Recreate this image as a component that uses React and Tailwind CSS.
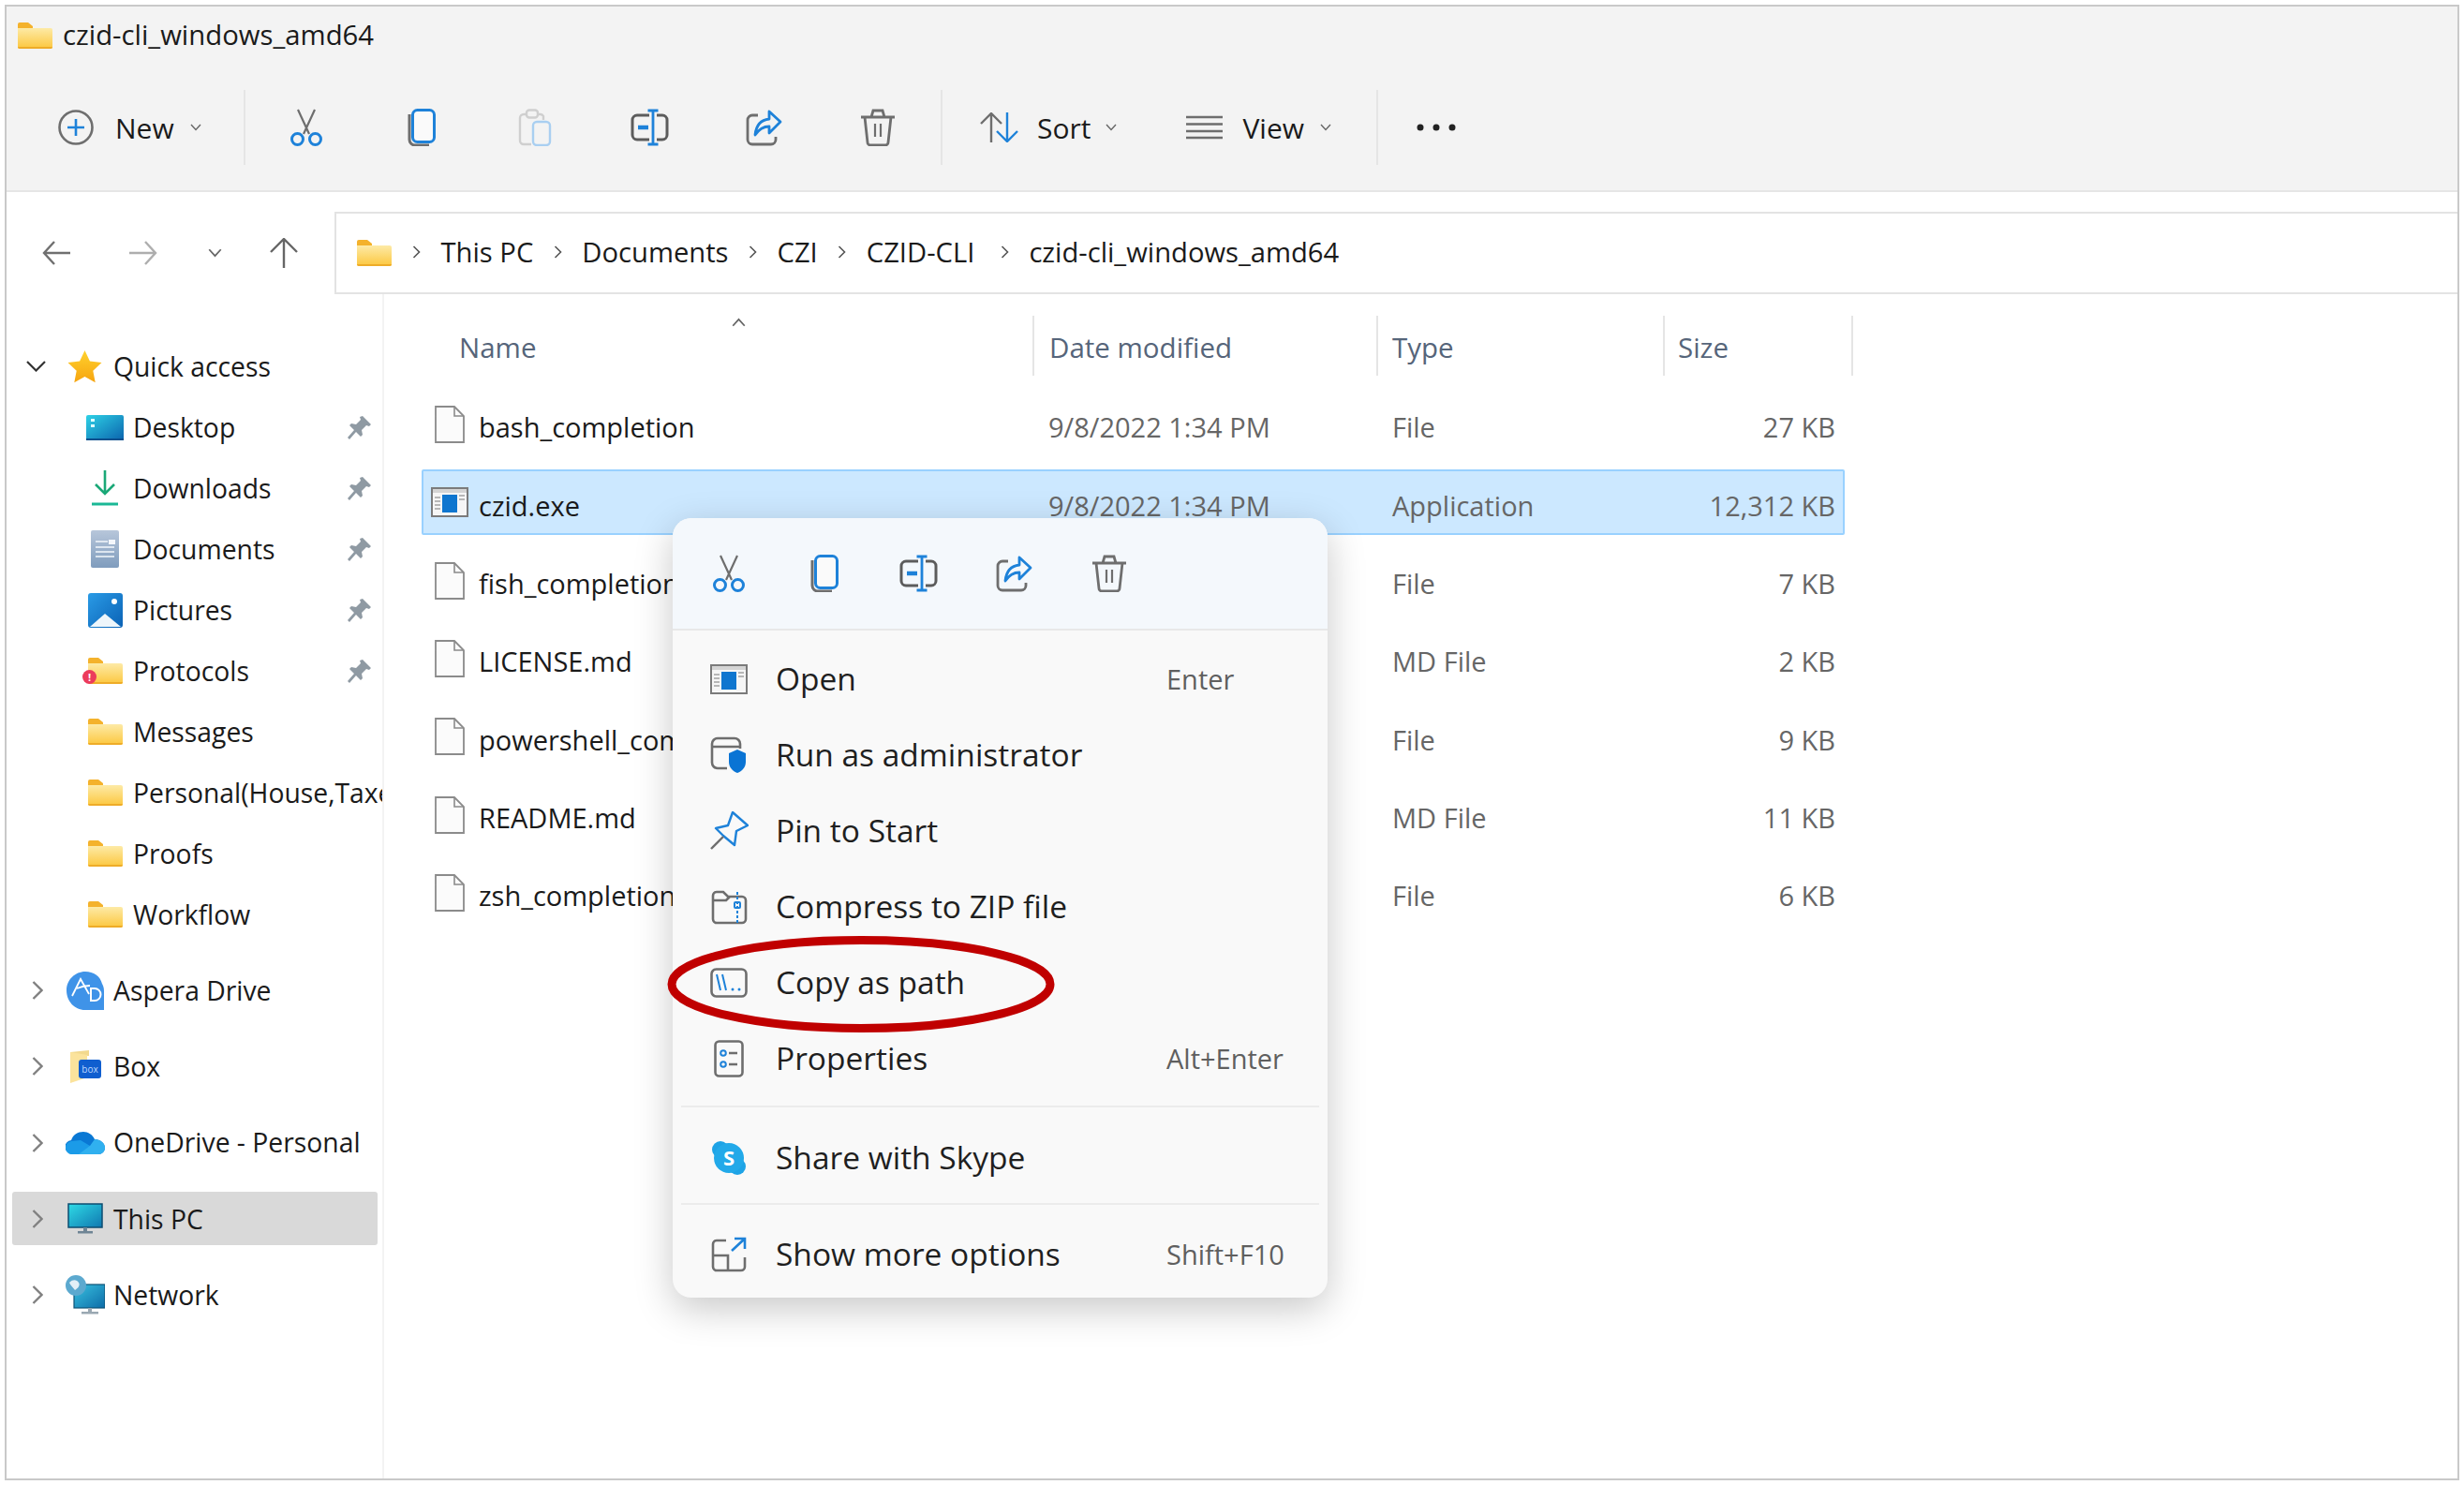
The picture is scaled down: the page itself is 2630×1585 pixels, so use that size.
const blue="#1e82d9";
const gray="#6e6e6e";

function FolderIcon({className="w-[37px] h-[28px]"}){
  return <svg viewBox="0 0 37 28" className={className}>
    <defs><linearGradient id="fold" x1="0" y1="0" x2="0" y2="1"><stop offset="0" stopColor="#fdeaa6"/><stop offset="1" stopColor="#fcc73e"/></linearGradient></defs>
    <path d="M0 2a2 2 0 0 1 2-2h9l5 4v4H0z" fill="#f4b22c"/>
    <path d="M0 6h35a2 2 0 0 1 2 2v18a2 2 0 0 1-2 2H2a2 2 0 0 1-2-2z" fill="url(#fold)"/>
    <path d="M0 26h37a2 2 0 0 1-2 2H2a2 2 0 0 1-2-2z" fill="#eeac28"/>
  </svg>;
}
function CutIcon(){
  return <svg viewBox="0 0 36 40" fill="none" className="w-[36px] h-[40px]">
    <path d="M9 1l12 26M27 1L15 27" stroke={gray} strokeWidth="2.2"/>
    <circle cx="8.5" cy="32.5" r="6" stroke={blue} strokeWidth="3"/>
    <circle cx="27.5" cy="32.5" r="6" stroke={blue} strokeWidth="3"/>
  </svg>;
}
function CopyIcon(){
  return <svg viewBox="0 0 31 40" fill="none" className="w-[31px] h-[40px]">
    <path d="M3 6v27a6 6 0 0 0 6 6h15" stroke={gray} strokeWidth="3"/>
    <rect x="6.5" y="1.5" width="23" height="34" rx="5" fill="#fafafa" stroke={blue} strokeWidth="3"/>
  </svg>;
}
function PasteIcon(){
  return <svg viewBox="0 0 36 40" fill="none" className="w-[36px] h-[40px]">
    <path d="M14 38H6a4 4 0 0 1-4-4V10a4 4 0 0 1 4-4h18a4 4 0 0 1 3 2v4" stroke="#cfcfcf" strokeWidth="2.4"/>
    <rect x="9" y="1.5" width="12" height="8" rx="3" fill="#f3f3f3" stroke="#cfcfcf" strokeWidth="2.4"/>
    <rect x="16" y="14" width="18" height="25" rx="4" fill="#f3f3f3" stroke="#a9cff1" strokeWidth="2.4"/>
  </svg>;
}
function RenameIcon(){
  return <svg viewBox="0 0 41 40" fill="none" className="w-[41px] h-[40px]">
    <path d="M20 7H7a5 5 0 0 0-5 5v16a5 5 0 0 0 5 5h13M28 7h6a5 5 0 0 1 5 5v16a5 5 0 0 1-5 5h-6" stroke="#5c5c5c" strokeWidth="3"/>
    <path d="M24 2v36M18.500 2h11M18.500 38h11" stroke={blue} strokeWidth="2.800"/>
    <path d="M8 20h11" stroke={blue} strokeWidth="4.500"/>
  </svg>;
}
function ShareIcon(){
  return <svg viewBox="0 0 39 40" fill="none" className="w-[39px] h-[40px]">
    <path d="M13 7H7a5 5 0 0 0-5 5v21a5 5 0 0 0 5 5h20a5 5 0 0 0 5-5v-3" stroke={gray} strokeWidth="2.8"/>
    <path d="M25 3l12 11-12 12v-7c-7 0-11 3-15 9 1-10 6-16 15-17z" stroke={blue} strokeWidth="2.8" strokeLinejoin="round"/>
  </svg>;
}
function TrashIcon(){
  return <svg viewBox="0 0 38 40" fill="none" stroke={gray} strokeWidth="2.8" className="w-[38px] h-[40px]">
    <path d="M1 9h36M12 9l2-7h10l2 7M5 9l3 27a3 3 0 0 0 3 3h16a3 3 0 0 0 3-3l3-27"/>
    <path d="M16 16v14M22 16v14" strokeWidth="2.2"/>
  </svg>;
}
function Caret({className="w-[12px] h-[8px]",color="#666"}){
  return <svg viewBox="0 0 12 8" fill="none" className={className}><path d="M1 1l5 5.5L11 1" stroke={color} strokeWidth="1.4"/></svg>;
}
function Crumb(){
  return <svg viewBox="0 0 9 14" fill="none" className="w-[9px] h-[14px] shrink-0"><path d="M1.5 1l6 6-6 6" stroke="#555" strokeWidth="1.6"/></svg>;
}
function PageIcon(){
  return <svg viewBox="0 0 32 40" fill="none" className="w-[32px] h-[40px]">
    <path d="M1 1h20l10 10v28H1z" fill="#fbfbfb" stroke="#8b8b8b" strokeWidth="1.8"/>
    <path d="M21 1v10h10" stroke="#8b8b8b" strokeWidth="1.6"/>
  </svg>;
}
function ExeIcon(){
  return <svg viewBox="0 0 40 32" className="w-[40px] h-[32px]">
    <rect x="1" y="1" width="38" height="30" fill="#f6f6f6" stroke="#7b7b7b" strokeWidth="2"/>
    <rect x="2" y="2" width="36" height="4" fill="#d5d5d5"/>
    <rect x="12" y="8" width="16" height="19" fill="#0f76cf"/>
    <path d="M4 11h6M4 15h6M4 19h6M4 23h6M30 9h6M30 13h6" stroke="#a3a3a3" strokeWidth="1.4"/>
  </svg>;
}
function Pin(){
  return <svg viewBox="0 0 26 26" className="w-[26px] h-[26px]">
    <path d="M16 1l9 9-2 2-3-1-5 5 1 5-2 2-5-5-7 8-2-2 7-8-5-5 2-2 5 1 5-5-1-3z" fill="#8f9aa3"/>
  </svg>;
}
function QuickIcon({kind}){
  if(kind==="desktop")return <svg viewBox="0 0 40 27" className="w-[40px] h-[27px]">
    <defs><linearGradient id="desk" x1="0" y1="0" x2="1" y2="1"><stop offset="0" stopColor="#2ed2e6"/><stop offset="1" stopColor="#0b63ad"/></linearGradient></defs>
    <rect width="40" height="27" rx="2" fill="url(#desk)"/><rect x="5" y="4" width="4" height="3" fill="#dff"/><rect x="5" y="10" width="4" height="3" fill="#dff"/>
    <path d="M0 25h40v2H0z" fill="#0a4f8d"/>
  </svg>;
  if(kind==="downloads")return <svg viewBox="0 0 30 40" fill="none" className="w-[30px] h-[40px]">
    <path d="M15 1v25M5 16l10 10 10-10" stroke="#1aa877" strokeWidth="2.6"/><path d="M1 37h28" stroke="#1bb896" strokeWidth="3"/>
  </svg>;
  if(kind==="documents")return <svg viewBox="0 0 30 40" className="w-[30px] h-[40px]">
    <defs><linearGradient id="docs" x1="0" y1="0" x2="0" y2="1"><stop offset="0" stopColor="#b7c6da"/><stop offset="1" stopColor="#7f9cbd"/></linearGradient></defs>
    <rect width="30" height="40" rx="2" fill="url(#docs)"/>
    <path d="M5 12h13M5 18h20M5 23h20M5 28h20" stroke="#f4f7fb" strokeWidth="1.5"/><rect x="19" y="10" width="7" height="5" fill="#f4f7fb"/>
  </svg>;
  if(kind==="pictures")return <svg viewBox="0 0 37 37" className="w-[37px] h-[37px]">
    <defs><linearGradient id="pics" x1="0" y1="0" x2="1" y2="1"><stop offset="0" stopColor="#2a9be6"/><stop offset="1" stopColor="#0b62b5"/></linearGradient></defs>
    <rect width="37" height="37" rx="3" fill="url(#pics)"/><path d="M2 36l16-14 17 14z" fill="#eef6fb"/><circle cx="28" cy="9" r="3" fill="#fff"/>
  </svg>;
  return <FolderIcon/>;
}
function StarIcon(){
  return <svg viewBox="0 0 37 36" className="w-[37px] h-[36px]">
    <defs><linearGradient id="star" x1="0" y1="0" x2="0" y2="1"><stop offset="0" stopColor="#ffd22e"/><stop offset="1" stopColor="#f6a40f"/></linearGradient></defs>
    <path d="M18.5 1l5.4 11.4 12.6 1.6-9.2 8.7 2.4 12.6-11.2-6.2-11.2 6.2 2.4-12.6L.5 14l12.6-1.6z" fill="url(#star)"/>
  </svg>;
}
function DriveIcon({kind}){
  if(kind==="aspera")return <svg viewBox="0 0 40 42" className="w-[40px] h-[42px]">
    <path d="M20 1c9 0 16 5 18 13 1 2 2 4 2 8v20H20C8 42 0 32 0 21 0 10 9 1 20 1z" fill="#3f93e8"/>
    <path d="M6 27L15 9l9 16M11 19c7-3 12-3 14-3" fill="none" stroke="#fff" strokeWidth="1.8"/>
    <path d="M26 19v13h4a6.500 6.500 0 0 0 0-13z" fill="none" stroke="#fff" strokeWidth="2"/>
  </svg>;
  if(kind==="box")return <svg viewBox="0 0 34 36" className="w-[34px] h-[36px]">
    <path d="M1 3l20-2v6H1z" fill="#f2d98e"/><path d="M1 3l18 3v24L1 36z" fill="#fbe39c"/>
    <rect x="10" y="11" width="24" height="20" rx="3" fill="#0f5ecf"/>
    <text x="22" y="25" textAnchor="middle" fontSize="10" fill="#bcd7ff" fontFamily="Open Sans">box</text>
  </svg>;
  if(kind==="onedrive")return <svg viewBox="0 0 42 24" className="w-[42px] h-[24px]">
    <path d="M7 23a7 7 0 0 1-1-14C8 3 13 0 19 0c5 0 10 3 12 8 6 0 11 4 11 9 0 4-3 7-7 7H8z" fill="#0a78d4"/>
    <path d="M8 24a7 7 0 0 1-2-14l10-1 10 6 9 9z" fill="#1b9be8"/><path d="M14 24l12-9 5-7c6 0 11 4 11 9 0 4-3 7-7 7z" fill="#30b0ef"/>
  </svg>;
  if(kind==="pc")return <svg viewBox="0 0 38 33" className="w-[38px] h-[33px]">
    <defs><linearGradient id="mon" x1="0" y1="0" x2="1" y2="1"><stop offset="0" stopColor="#2fdbe6"/><stop offset="1" stopColor="#0f77b0"/></linearGradient></defs>
    <rect x="1" y="1" width="36" height="25" fill="url(#mon)" stroke="#0c4c70" strokeWidth="1.5"/>
    <rect x="17" y="26" width="4" height="4" fill="#6f8595"/><rect x="11" y="30" width="16" height="2.500" fill="#6f8595"/>
  </svg>;
  return <svg viewBox="0 0 42 42" className="w-[42px] h-[42px]">
    <defs><linearGradient id="net" x1="0" y1="0" x2="1" y2="1"><stop offset="0" stopColor="#39c2e0"/><stop offset="1" stopColor="#0d6ca8"/></linearGradient></defs>
    <rect x="9" y="10" width="33" height="25" fill="url(#net)" stroke="#0c5276" strokeWidth="1.200"/>
    <rect x="24" y="35" width="4" height="4" fill="#9aa8b2"/><rect x="17" y="39" width="18" height="2.500" fill="#9aa8b2"/>
    <circle cx="11" cy="11" r="11" fill="#5ca9cf"/><path d="M4 8c4-4 8-3 10 0 2 3-1 6-4 8-2-3-5-5-6-8z" fill="#e3f0f7"/>
  </svg>;
}
function OpenIcon(){return <ExeIcon/>;}
function AdminIcon(){
  return <svg viewBox="0 0 40 40" fill="none" className="w-[40px] h-[40px]">
    <path d="M18 34H8a6 6 0 0 1-6-6V8a6 6 0 0 1 6-6h18a6 6 0 0 1 6 6v5M2 11h30" stroke={gray} strokeWidth="2.6"/>
    <path d="M29 14l9 4v9c0 6-4 10-9 12-5-2-9-6-9-12v-9z" fill="#0a74d4"/>
  </svg>;
}
function PinOutline(){
  return <svg viewBox="0 0 41 41" fill="none" className="w-[41px] h-[41px]">
    <path d="M24 1l16 14-12 6-2 15-12-10-8-8 13-3z" stroke={blue} strokeWidth="2.400" strokeLinejoin="round"/>
    <path d="M14 27L1 40" stroke={gray} strokeWidth="2.400"/>
  </svg>;
}
function ZipIcon(){
  return <svg viewBox="0 0 40 38" fill="none" className="w-[40px] h-[38px]">
    <path d="M3 32V7a4 4 0 0 1 4-4h7l5 5h15a4 4 0 0 1 4 4v20a4 4 0 0 1-4 4H7a4 4 0 0 1-4-4zM3 12h14l4-4" stroke={gray} strokeWidth="2.6"/>
    <path d="M29 3v34" stroke={blue} strokeWidth="2" strokeDasharray="3 2"/><rect x="26" y="14" width="6" height="6" rx="1" stroke={blue} strokeWidth="2"/>
  </svg>;
}
function PathIcon(){
  return <svg viewBox="0 0 40 32" fill="none" className="w-[40px] h-[32px]">
    <rect x="1.500" y="1.500" width="37" height="29" rx="5" stroke={gray} strokeWidth="2.600"/>
    <path d="M7 7l4 17M13 7l4 17" stroke={blue} strokeWidth="2"/><circle cx="24" cy="23" r="1.500" fill={blue}/><circle cx="31" cy="23" r="1.500" fill={blue}/>
  </svg>;
}
function PropsIcon(){
  return <svg viewBox="0 0 32 40" fill="none" className="w-[32px] h-[40px]">
    <rect x="1.500" y="1.500" width="29" height="37" rx="4" stroke={gray} strokeWidth="2.600"/>
    <circle cx="10" cy="14" r="2.800" stroke={blue} strokeWidth="2"/><circle cx="10" cy="26" r="2.800" stroke={blue} strokeWidth="2"/>
    <path d="M16 14h9M16 26h9" stroke={gray} strokeWidth="2.400"/>
  </svg>;
}
function SkypeIcon(){
  return <svg viewBox="0 0 38 38" className="w-[38px] h-[38px]">
    <circle cx="10" cy="10" r="9" fill="#1ea3e6"/><circle cx="28" cy="28" r="9" fill="#1ea3e6"/><circle cx="19" cy="19" r="16" fill="#22a9e9"/>
    <text x="19" y="27" textAnchor="middle" fontSize="22" fontWeight="700" fill="#fff" fontFamily="Open Sans">S</text>
  </svg>;
}
function MoreIcon(){
  return <svg viewBox="0 0 38 38" fill="none" className="w-[38px] h-[38px]">
    <path d="M16 4H6a4 4 0 0 0-4 4v24a4 4 0 0 0 4 4h26a4 4 0 0 0 4-4V22M2 20h16v16" stroke={gray} strokeWidth="2.600"/>
    <path d="M22 15L36 2M25 2h11v11" stroke={blue} strokeWidth="2.600"/>
  </svg>;
}

const quickItems=[
  {label:"Desktop",kind:"desktop",pinned:true},
  {label:"Downloads",kind:"downloads",pinned:true},
  {label:"Documents",kind:"documents",pinned:true},
  {label:"Pictures",kind:"pictures",pinned:true},
  {label:"Protocols",kind:"folder",pinned:true,badge:true},
  {label:"Messages",kind:"folder"},
  {label:"Personal(House,Taxes)",kind:"folder"},
  {label:"Proofs",kind:"folder"},
  {label:"Workflow",kind:"folder"},
];
const driveItems=[
  {label:"Aspera Drive",kind:"aspera"},
  {label:"Box",kind:"box"},
  {label:"OneDrive - Personal",kind:"onedrive"},
  {label:"This PC",kind:"pc",active:true},
  {label:"Network",kind:"network"},
];
// dates of the lower rows sit behind the context menu
const files=[
  {name:"bash_completion",date:"9/8/2022 1:34 PM",type:"File",size:"27 KB"},
  {name:"czid.exe",date:"9/8/2022 1:34 PM",type:"Application",size:"12,312 KB",selected:true},
  {name:"fish_completion",type:"File",size:"7 KB"},
  {name:"LICENSE.md",type:"MD File",size:"2 KB"},
  {name:"powershell_completion",type:"File",size:"9 KB"},
  {name:"README.md",type:"MD File",size:"11 KB"},
  {name:"zsh_completion",type:"File",size:"6 KB"},
];
const crumbs=["This PC","Documents","CZI","CZID-CLI","czid-cli_windows_amd64"];

function MenuRow({icon,label,shortcut}){
  return <div className="flex items-center h-[81px] pl-[10px]">
    <span className="w-[100px] flex justify-center shrink-0">{icon}</span>
    <span className="text-[33.5px] text-[#1f1f1f]">{label}</span>
    {shortcut&&<span className="ml-auto w-[172px] text-[29px] text-[#5f5f5f]">{shortcut}</span>}
  </div>;
}

export default function App(){
  return <div className="relative w-[2630px] h-[1585px] bg-white p-[5px] font-['Open_Sans',sans-serif] text-[#1a1a1a] overflow-hidden">
    <div className="flex flex-col w-full h-full border-[2.5px] border-[#c9c9c9]">
      <div className="h-[197.5px] bg-[#f3f3f3] border-b-2 border-[#e6e6e6] shrink-0">
        <div className="flex items-center gap-[11px] h-[62px] pl-[12px]">
          <FolderIcon/>
          <span className="text-[29.3px]">czid-cli_windows_amd64</span>
        </div>
        <div className="flex items-center h-[80px] mt-[27px]">
          <div className="flex items-center w-[253px] pl-[55px]">
            <svg viewBox="0 0 38 38" fill="none" className="w-[38px] h-[38px]">
              <circle cx="19" cy="19" r="17.500" stroke={gray} strokeWidth="2.600"/><path d="M19 10v18M10 19h18" stroke={blue} strokeWidth="2.600"/>
            </svg>
            <span className="ml-[23px] text-[30px]">New</span>
            <span className="ml-[17px]"><Caret/></span>
          </div>
          <div className="w-[2px] h-[80px] bg-[#e5e5e5]"/>
          <div className="flex items-center pl-[4px]">
            <span className="flex justify-center w-[122px]"><CutIcon/></span>
            <span className="flex justify-center w-[122px]"><CopyIcon/></span>
            <span className="flex justify-center w-[122px]"><PasteIcon/></span>
            <span className="flex justify-center w-[122px]"><RenameIcon/></span>
            <span className="flex justify-center w-[122px]"><ShareIcon/></span>
            <span className="flex justify-center w-[122px]"><TrashIcon/></span>
          </div>
          <div className="w-[2px] h-[80px] bg-[#e5e5e5] ml-[6px]"/>
          <div className="flex items-center pl-[40px]">
            <svg viewBox="0 0 41 32" fill="none" className="w-[41px] h-[32px]">
              <path d="M12 32V1M1 12L12 1l11 11" stroke={gray} strokeWidth="2.400"/><path d="M29 0v31M18 20l11 11 11-11" stroke={blue} strokeWidth="2.400"/>
            </svg>
            <span className="ml-[20px] text-[30px]">Sort</span>
            <span className="ml-[16px]"><Caret/></span>
            <svg viewBox="0 0 39 26" fill="none" className="w-[39px] h-[26px] ml-[74px]">
              <path d="M0 2h39M0 9.500h39M0 17h39M0 24h39" stroke={gray} strokeWidth="2.400"/>
            </svg>
            <span className="ml-[21px] text-[30px]">View</span>
            <span className="ml-[17px]"><Caret/></span>
          </div>
          <div className="w-[2px] h-[80px] bg-[#e5e5e5] ml-[48px]"/>
          <svg viewBox="0 0 42 8" className="w-[42px] h-[8px] ml-[41px]"><circle cx="4" cy="4" r="3.500" fill="#222"/><circle cx="21" cy="4" r="3.500" fill="#222"/><circle cx="38" cy="4" r="3.500" fill="#222"/></svg>
        </div>
      </div>
      <div className="flex items-center h-[109px] shrink-0 pt-[21px]">
        <div className="flex items-center w-[350px] shrink-0 pl-[38px]">
          <svg viewBox="0 0 30 26" fill="none" className="w-[30px] h-[26px]"><path d="M13 1L2 13l11 12M2 13h28" stroke="#707070" strokeWidth="2.400"/></svg>
          <svg viewBox="0 0 30 26" fill="none" className="w-[30px] h-[26px] ml-[63px]"><path d="M17 1l11 12-11 12M28 13H0" stroke="#aeaeae" strokeWidth="2.400"/></svg>
          <span className="ml-[54px]"><Caret className="w-[15px] h-[10px]"/></span>
          <svg viewBox="0 0 30 32" fill="none" className="w-[30px] h-[32px] ml-[51px]"><path d="M15 32V1M1 15L15 1l14 14" stroke="#666" strokeWidth="2.400"/></svg>
        </div>
        <div className="flex items-center flex-1 h-[88px] border-2 border-r-0 border-[#e3e3e3] pl-[22px]">
          <FolderIcon/>
          <span className="flex items-center ml-[22px] gap-[21.5px] text-[29.2px]">
            <Crumb/>
            {crumbs.map((c,i)=><span key={c} className={`flex items-center gap-[21.5px] ${i===4?"ml-[6px]":""}`}>{i>0&&<Crumb/>}<span>{c}</span></span>)}
          </span>
        </div>
      </div>
      <div className="flex flex-1 min-h-0">
        <aside className="w-[403px] shrink-0 border-r-2 border-[#f3f3f3] pt-[45px] overflow-hidden">
          <div className="flex items-center h-[65px] text-[28.3px] pl-[21px]">
            <svg viewBox="0 0 21 12" fill="none" className="w-[21px] h-[12px]"><path d="M1 1l9.500 9.500L20 1" stroke="#333" strokeWidth="2.200"/></svg>
            <span className="ml-[23px]"><StarIcon/></span>
            <span className="ml-[12px]">Quick access</span>
          </div>
          {quickItems.map(item=><div key={item.label} className="flex items-center h-[65px] text-[28.3px]">
            <span className="relative flex justify-center w-[60px] ml-[75px] shrink-0">
              <QuickIcon kind={item.kind}/>
              {item.badge&&<span className="absolute left-[6px] top-[13px] w-[15px] h-[15px] rounded-full bg-[#ec3b5c] text-white text-[11px] leading-[15px] text-center font-bold">!</span>}
            </span>
            <span className="whitespace-nowrap">{item.label}</span>
            {item.pinned&&<span className="ml-auto mr-[11px]"><Pin/></span>}
          </div>)}
          <div className="flex flex-col gap-[24.3px] mt-[20px]">
            {driveItems.map(item=><div key={item.label} className={`flex items-center h-[57px] text-[28.3px] ml-[6px] mr-[5.5px] rounded-[3px] ${item.active?"bg-[#d9d9d9]":""}`}>
              <svg viewBox="0 0 12 20" fill="none" className="w-[12px] h-[20px] ml-[21px] shrink-0"><path d="M1.500 1l9 9-9 9" stroke="#808080" strokeWidth="2.400"/></svg>
              <span className="flex justify-center w-[42px] ml-[24px] shrink-0"><DriveIcon kind={item.kind}/></span>
              <span className="ml-[9px] whitespace-nowrap">{item.label}</span>
            </div>)}
          </div>
        </aside>
        <main className="flex-1 min-w-0 pt-[23px] pl-[40px]">
          <div className="relative flex items-center w-[1528px] h-[64px] text-[29.5px] text-[#56657a]">
            <span className="w-[652px] pl-[40px] pt-[5px] shrink-0">Name</span>
            <span className="absolute left-[329px] top-[2px]"><Caret className="w-[19px] h-[10px] rotate-180"/></span>
            <span className="w-[367px] shrink-0 border-l-2 border-[#e5e5e5] h-full flex items-center pl-[16px] pt-[5px]">Date modified</span>
            <span className="w-[306px] shrink-0 border-l-2 border-[#e5e5e5] h-full flex items-center pl-[15px] pt-[5px]">Type</span>
            <span className="w-[203px] shrink-0 border-x-2 border-[#e5e5e5] h-full flex items-center pl-[14px] pt-[5px]">Size</span>
          </div>
          <div className="flex flex-col gap-[13.3px] pt-[17.7px]">
            {files.map(f=><div key={f.name} className={`flex items-center w-[1519px] h-[70px] text-[29px] rounded-[2px] border-2 ${f.selected?"bg-[#cce8ff] border-[#99d1ff]":"border-transparent"}`}>
              <span className="flex items-center w-[667px] shrink-0 overflow-hidden">
                <span className="flex justify-center w-[56px] mr-[3px] shrink-0">{f.selected?<ExeIcon/>:<PageIcon/>}</span>
                <span className="whitespace-nowrap pt-[6px]">{f.name}</span>
              </span>
              <span className="w-[367px] shrink-0 pt-[6px] text-[#666]">{f.date}</span>
              <span className="flex-1 pt-[6px] text-[#666]">{f.type}</span>
              <span className="pr-[8px] pt-[6px] text-[#666]">{f.size}</span>
            </div>)}
          </div>
        </main>
      </div>
    </div>

    <div className="absolute left-[718px] top-[553px] w-[699px] h-[832px] rounded-[20px] bg-[#f9f9f9] shadow-[0_12px_40px_rgba(0,0,0,0.22)] overflow-hidden">
      <div className="flex items-center h-[120px] pl-[9px] bg-[#f4f8fc] border-b-2 border-[#e8e8e8]">
        <span className="flex justify-center w-[101.5px]"><CutIcon/></span>
        <span className="flex justify-center w-[101.5px]"><CopyIcon/></span>
        <span className="flex justify-center w-[101.5px]"><RenameIcon/></span>
        <span className="flex justify-center w-[101.5px]"><ShareIcon/></span>
        <span className="flex justify-center w-[101.5px]"><TrashIcon/></span>
      </div>
      <div className="pt-[11px] pb-[10px]">
        <MenuRow icon={<OpenIcon/>} label="Open" shortcut="Enter"/>
        <MenuRow icon={<AdminIcon/>} label="Run as administrator"/>
        <MenuRow icon={<PinOutline/>} label="Pin to Start"/>
        <MenuRow icon={<ZipIcon/>} label="Compress to ZIP file"/>
        <MenuRow icon={<PathIcon/>} label="Copy as path"/>
        <MenuRow icon={<PropsIcon/>} label="Properties" shortcut="Alt+Enter"/>
      </div>
      <div className="mx-[9px] h-[2px] bg-[#ececec]"/>
      <div className="pt-[13px] pb-[8px]"><MenuRow icon={<SkypeIcon/>} label="Share with Skype"/></div>
      <div className="mx-[9px] h-[2px] bg-[#ececec]"/>
      <div className="pt-[12px]"><MenuRow icon={<MoreIcon/>} label="Show more options" shortcut="Shift+F10"/></div>
    </div>

    <svg viewBox="0 0 414 103" fill="none" className="absolute left-[712px] top-[999px] w-[414px] h-[103px]">
      <ellipse cx="207" cy="51.500" rx="202" ry="47" stroke="#c00000" strokeWidth="9"/>
    </svg>
  </div>;
}
